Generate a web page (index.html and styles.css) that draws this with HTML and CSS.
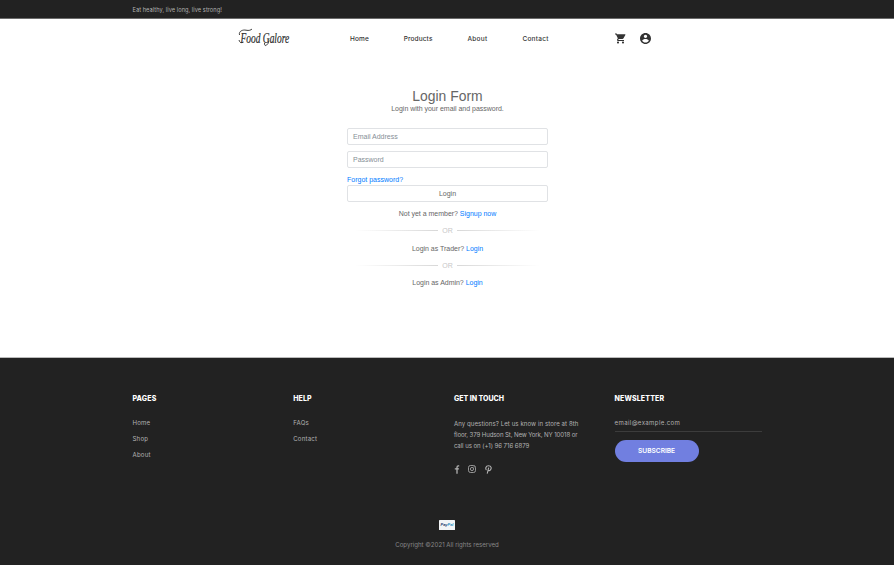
FILE: index.html
```
<!DOCTYPE html>
<html lang="en">
<head>
<meta charset="utf-8">
<title>Food Galore</title>
<link rel="stylesheet" href="styles.css">
</head>
<body>
<div class="topbar"><span class="tagline">Eat healthy, live long, live strong!</span></div>
<header class="header">
  <a class="logo" href="#"><svg width="60" height="24" viewBox="0 0 60 24"><g transform="translate(3.500 15.500) scale(.61 1)"><text font-family="Liberation Serif" font-style="italic" font-size="15.500" fill="#2b2b2b" stroke="#2b2b2b" stroke-width=".2">Food Galore</text></g><path d="M2.500 8C1.500 4 6 2.500 9 3.200S14 3 15 2M2 13q1 4 4.500 2M27.500 16q0 5 3.500 .5l1-3" fill="none" stroke="#2b2b2b" stroke-width=".9"/></svg></a>
  <nav class="nav"><a>Home</a><a>Products</a><a>About</a><a>Contact</a></nav>
  <div class="actions">
    <svg width="11" height="11" viewBox="1 1 22 22" fill="#333"><path d="M7 18c-1.100 0-2 .9-2 2s.9 2 2 2 2-.9 2-2-.9-2-2-2zM1 2v2h2l3.600 7.600-1.400 2.400C4.500 15.400 5.500 17 7 17h12v-2H7.400l1.100-2h7.500c.7 0 1.400-.4 1.700-1L21.700 5c.4-.7-.1-1.500-.9-1.500H5.200L4.300 2H1zm16 16c-1.100 0-2 .9-2 2s.9 2 2 2 2-.9 2-2-.9-2-2-2z"/></svg>
    <svg width="11" height="11" viewBox="2 2 20 20" fill="#333"><path d="M12 2C6.500 2 2 6.500 2 12s4.500 10 10 10 10-4.500 10-10S17.500 2 12 2zm0 3c1.700 0 3 1.300 3 3s-1.300 3-3 3-3-1.300-3-3 1.300-3 3-3zm0 14.200c-2.500 0-4.700-1.300-6-3.200 0-2 4-3.100 6-3.100s6 1.100 6 3.100c-1.300 1.900-3.500 3.200-6 3.200z"/></svg>
  </div>
</header>
<main class="login">
  <h1>Login Form</h1>
  <p class="sub">Login with your email and password.</p>
  <div class="field">Email Address</div>
  <div class="field">Password</div>
  <a class="link forgot">Forgot password?</a>
  <button class="submit">Login</button>
  <p class="line">Not yet a member? <a class="link">Signup now</a></p>
  <div class="or"><span>OR</span></div>
  <p class="line">Login as Trader? <a class="link">Login</a></p>
  <div class="or"><span>OR</span></div>
  <p class="line">Login as Admin? <a class="link">Login</a></p>
</main>
<footer class="footer">
  <div class="cols">
    <section><h2 class="wide">PAGES</h2><ul><li>Home</li><li>Shop</li><li>About</li></ul></section>
    <section><h2 class="wide">HELP</h2><ul><li>FAQs</li><li>Contact</li></ul></section>
    <section><h2>GET IN TOUCH</h2>
      <p class="address"><span class="store">Any questions? Let us know in store at 8th</span><br><span class="street">floor, 379 Hudson St, New York, NY 10018 or</span><br><span class="phone">call us on (+1) 96 716 6879</span></p>
      <div class="social">
        <svg width="6" height="9" viewBox="0 0 6 9"><path d="M5.200 .9H4.300Q3 .9 3 2.300V8.700M.8 3.900H4.900" fill="none" stroke="#b2b2b2" stroke-width="1.300"/></svg>
        <svg width="8" height="8" viewBox="0 0 8 8" fill="none" stroke="#b2b2b2" stroke-width=".8"><rect x=".5" y=".5" width="7" height="7" rx="2"/><circle cx="4" cy="4" r="1.600"/><circle cx="6" cy="2" r=".2"/></svg>
        <svg width="7" height="9" viewBox="0 0 7 9" fill="none" stroke="#b2b2b2" stroke-width="1.100"><path d="M1.500 5C.3 4 .5 .7 3.500 .7S6.800 3.500 5.300 5.100C4.500 6 3.200 5.700 3 5M3.700 2.700L2.200 8.700"/></svg>
      </div>
    </section>
    <section><h2 class="wide">NEWSLETTER</h2><div class="email"><span>email@example.com</span></div><button class="subscribe">SUBSCRIBE</button></section>
  </div>
  <div class="bottom">
    <svg width="16" height="10" viewBox="0 0 16 10"><rect width="16" height="10" rx=".6" fill="#f2f4f6"/><text x="1.500" y="6.300" font-family="Liberation Sans" font-weight="bold" font-style="italic" font-size="4.200" fill="#1c3a70" textLength="13" lengthAdjust="spacingAndGlyphs">Pay<tspan fill="#2790c3">Pal</tspan></text></svg>
    <p>Copyright ©2021 All rights reserved</p>
  </div>
</footer>
</body>
</html>
```
FILE: styles.css
```
* { box-sizing: border-box; }
body { margin: 0; background: #fff; font-family: "Liberation Sans", sans-serif; font-size: 7px; color: #666; width: 894px; height: 565px; overflow: hidden; }
h1, h2, p, ul { margin: 0; padding: 0; }
ul { list-style: none; }
svg { display: block; }
button { padding: 0; font-family: inherit; }
.topbar { height: 19px; background: #222; border-bottom: 1px solid #6c6c6c; padding-left: 132.500px; display: flex; align-items: center; }
.tagline { font: 5.650px/10px Inter, sans-serif; letter-spacing: .06px; color: #b2b2b2; padding-top: 1px; }
.header { height: 39px; padding-left: 236.500px; display: flex; align-items: center; }
.logo { width: 113.500px; }
.nav { display: flex; gap: 34.900px; width: 265px; font: 500 6.500px/10px Inter, sans-serif; letter-spacing: .12px; color: #333; }
.nav a:nth-child(3) { letter-spacing: .28px; }
.nav a:nth-child(4) { letter-spacing: .26px; }
.actions { display: flex; align-items: center; gap: 14px; }
.login { width: 201px; height: 299px; margin: 0 0 0 347px; padding-top: 30px; display: flex; flex-direction: column; }
h1 { font-size: 13.900px; line-height: 16px; font-weight: 400; text-align: center; }
.sub { line-height: 10px; text-align: center; margin-bottom: 14px; letter-spacing: -.02px; }
.field { height: 17px; border: 1px solid #e0e2e5; border-radius: 2px; padding-left: 5px; line-height: 15px; color: #868e96; margin-bottom: 6px; }
.link { color: #007bff; }
.forgot { line-height: 10px; margin: 1px 0 0; }
.submit { height: 17px; border: 1px solid #e0e2e5; border-radius: 2px; background: #fff; font-size: 7px; line-height: 15px; color: #666; margin-bottom: 7px; }
.line { line-height: 10px; text-align: center; letter-spacing: -.02px; }
.or { height: 24.600px; display: flex; align-items: center; gap: 4px; padding: 0 8px 1px; color: #c8c8c8; }
.or::before, .or::after { content: ""; flex: 1; height: 1px; background: linear-gradient(to right, #fff, #d8d8d8); }
.or::after { background: linear-gradient(to left, #fff, #d8d8d8); }
.footer { height: 208px; background: #222; border-top: 1px solid #bbb; padding: 35.500px 132.500px 0; font-family: Inter, sans-serif; font-size: 6.100px; color: #b2b2b2; }
.cols { display: grid; grid-template-columns: 160.700px 160.700px 160.700px 147px; height: 126.500px; }
h2 { font: 800 7px/10px Inter, sans-serif; color: #fff; margin-bottom: 14px; padding-top: .5px; }
.wide { letter-spacing: .15px; }
.footer li { line-height: 10px; margin-bottom: 5.900px; letter-spacing: .2px; }
.address { line-height: 11.200px; margin-top: -.5px; }
.store { letter-spacing: .07px; }
.street { letter-spacing: -.11px; }
.phone { letter-spacing: -.07px; }
.social { display: flex; align-items: center; gap: 8.500px; margin-top: 13.500px; }
.email { height: 13.500px; line-height: 10px; letter-spacing: .36px; border-bottom: 1px solid #3c3c3c; margin-bottom: 8px; }
.subscribe { width: 84px; height: 22px; border: 0; border-radius: 11px; background: #717fe0; color: #fff; font: 600 6.600px/22px Inter, sans-serif; display: block; }
.bottom { display: flex; flex-direction: column; align-items: center; color: #888; }
.bottom p { line-height: 10px; margin-top: 10px; }
```
